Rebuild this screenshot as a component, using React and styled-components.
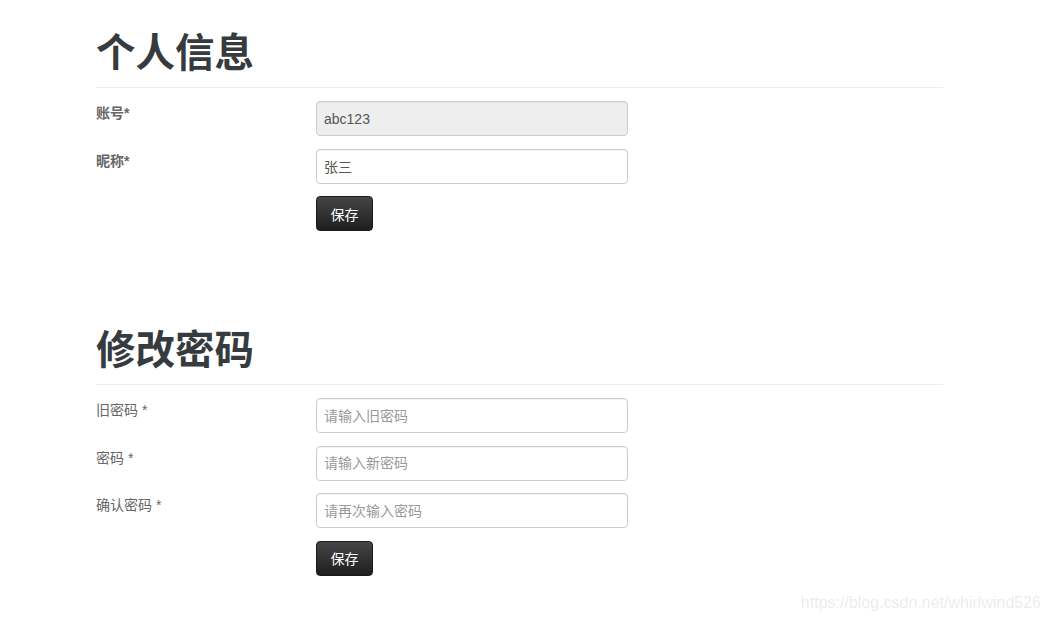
import React from "react";
import styled, { createGlobalStyle } from "styled-components";

const Global = createGlobalStyle`
  html, body { margin: 0; padding: 0; background: #fff; }
  body {
    font-family: "Liberation Sans", "Noto Sans CJK SC", sans-serif;
    font-size: 14px;
    color: #333;
    height: 620px;
    overflow: hidden;
  }
`;

const Page = styled.div`
  width: 847px;
  padding: 27px 0 0 96px;
`;

const Section = styled.section`
  margin-bottom: ${(p) => p.$gap || 0}px;
`;

const Heading = styled.h1`
  margin: 0;
  font-family: "Noto Sans CJK SC", sans-serif;
  font-size: 39.5px;
  line-height: 46px;
  font-weight: 700;
  color: #363b3f;
`;

const Rule = styled.hr`
  margin: 14px 0 13px;
  border: 0;
  border-top: 1px solid #eee;
`;

const Form = styled.form`
  display: grid;
  grid-template-columns: 220px 312px;
  row-gap: 12.5px;
  align-items: start;
`;

const Label = styled.label`
  padding-top: 2px;
  font-family: "Liberation Sans", "Noto Sans CJK SC", sans-serif;
  font-size: 14px;
  line-height: 20px;
  color: #666;
  font-weight: ${(p) => (p.$bold ? 700 : 400)};
`;

const Input = styled.input`
  box-sizing: border-box;
  width: 312px;
  height: 35px;
  padding: 0 7px;
  border: 1px solid #ccc;
  border-radius: 4px;
  background: ${(p) => (p.disabled ? "#eee" : "#fff")};
  box-shadow: inset 0 1px 1px rgba(0, 0, 0, 0.05);
  font-family: "Liberation Sans", "Noto Sans CJK SC", sans-serif;
  font-size: 14px;
  color: #555;
  outline: none;
  &::placeholder { color: #999; }
  &:disabled { color: #555; -webkit-text-fill-color: #555; opacity: 1; }
`;

const Button = styled.button`
  grid-column: 2;
  justify-self: start;
  width: 57px;
  height: 35px;
  padding: 0;
  border: 1px solid #1a1a1a;
  border-radius: 4px;
  background: linear-gradient(to bottom, #454545, #1f1f1f);
  color: #fff;
  font-family: "Noto Sans CJK SC", sans-serif;
  font-size: 14px;
  cursor: pointer;
`;

const Watermark = styled.div`
  position: fixed;
  right: 9px;
  bottom: 8px;
  font-family: "Liberation Sans", sans-serif;
  font-size: 16px;
  color: #ececec;
`;

export default function App() {
  return (
    <>
      <Global />
      <Page>
        <Section $gap={93}>
          <Heading>个人信息</Heading>
          <Rule />
          <Form onSubmit={(e) => e.preventDefault()}>
            <Label $bold>账号*</Label>
            <Input value="abc123" disabled readOnly />
            <Label $bold>昵称*</Label>
            <Input defaultValue="张三" />
            <Button type="submit">保存</Button>
          </Form>
        </Section>
        <Section>
          <Heading>修改密码</Heading>
          <Rule />
          <Form onSubmit={(e) => e.preventDefault()}>
            <Label>旧密码 *</Label>
            <Input type="text" placeholder="请输入旧密码" />
            <Label>密码 *</Label>
            <Input type="text" placeholder="请输入新密码" />
            <Label>确认密码 *</Label>
            <Input type="text" placeholder="请再次输入密码" />
            <Button type="submit">保存</Button>
          </Form>
        </Section>
      </Page>
      <Watermark>https://blog.csdn.net/whirlwind526</Watermark>
    </>
  );
}
